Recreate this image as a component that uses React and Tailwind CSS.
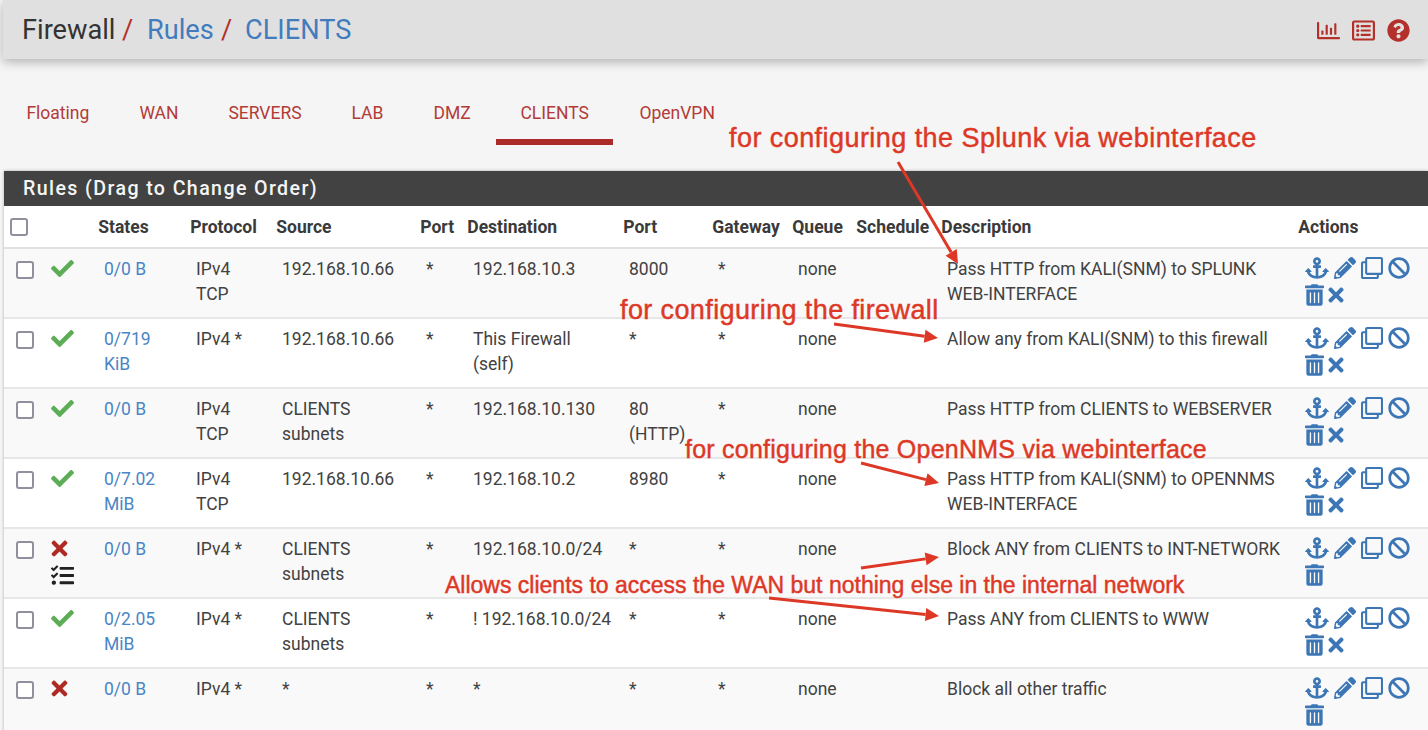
import React from "react";
import {
  FaAnchor, FaPencilAlt, FaRegClone, FaBan, FaTrashAlt, FaTimes, FaCheck,
  FaTasks, FaRegChartBar, FaRegListAlt, FaQuestionCircle,
} from "react-icons/fa";

const COLS = "grid grid-cols-[42px_47px_92px_86px_144px_47px_156px_89px_80px_64px_85px_357px_135px]";

const TABS = [
  ["Floating", "w-[113px]"],
  ["WAN", "w-[89px]"],
  ["SERVERS", "w-[123px]"],
  ["LAB", "w-[82px]"],
  ["DMZ", "w-[87px]"],
  ["CLIENTS", "w-[119px]"],
  ["OpenVPN", "w-[110px]"],
];

const HEADS = ["States", "Protocol", "Source", "Port", "Destination", "Port", "Gateway", "Queue", "Schedule", "Description", "Actions"];

const RULES = [
  { ok: true, cells: ["0/0 B", "IPv4\nTCP", "192.168.10.66", "*", "192.168.10.3", "8000", "*", "none", "", "Pass HTTP from KALI(SNM) to SPLUNK\nWEB-INTERFACE"], clear: true },
  { ok: true, cells: ["0/719\nKiB", "IPv4 *", "192.168.10.66", "*", "This Firewall\n(self)", "*", "*", "none", "", "Allow any from KALI(SNM) to this firewall"], clear: true },
  { ok: true, cells: ["0/0 B", "IPv4\nTCP", "CLIENTS\nsubnets", "*", "192.168.10.130", "80\n(HTTP)", "*", "none", "", "Pass HTTP from CLIENTS to WEBSERVER"], clear: true },
  { ok: true, cells: ["0/7.02\nMiB", "IPv4\nTCP", "192.168.10.66", "*", "192.168.10.2", "8980", "*", "none", "", "Pass HTTP from KALI(SNM) to OPENNMS\nWEB-INTERFACE"], clear: true },
  { ok: false, log: true, cells: ["0/0 B", "IPv4 *", "CLIENTS\nsubnets", "*", "192.168.10.0/24", "*", "*", "none", "", "Block ANY from CLIENTS to INT-NETWORK"] },
  { ok: true, cells: ["0/2.05\nMiB", "IPv4 *", "CLIENTS\nsubnets", "*", "! 192.168.10.0/24", "*", "*", "none", "", "Pass ANY from CLIENTS to WWW"], clear: true },
  { ok: false, cells: ["0/0 B", "IPv4 *", "*", "*", "*", "*", "*", "none", "", "Block all other traffic"] },
];

const Box = () => <span className="block size-[18px] rounded-[3px] border-2 border-[#8f8f9d] bg-white" />;

function Rule({ rule, odd }) {
  return (
    <div className={`${COLS} h-[70px] shrink-0 border-b-2 border-[#e7e7e7] pt-[8px] leading-[25px] ${odd ? "bg-[#f9f9f9]" : "bg-white"}`}>
      <div className="pt-[4px] pl-[12px]"><Box /></div>
      <div className="flex flex-col gap-[4px] pl-[5px]">
        {rule.ok ? <FaCheck size={23} color="#5cad56" /> : <FaTimes size={23} color="#ae2a25" className="-ml-[3px]" />}
        {rule.log && <FaTasks size={23} color="#212121" />}
      </div>
      {rule.cells.map((c, i) => (
        <div key={i} className={`pl-[11px] whitespace-pre ${i === 0 ? "text-[#4a85c5]" : ""}`}>{c}</div>
      ))}
      <div className="flex flex-col gap-[5px] pl-[12px] text-[#3d76b5]">
        <div className="flex gap-[5px]">
          <FaAnchor size={22} className="w-[24px]" />
          <FaPencilAlt size={22} />
          <FaRegClone size={22} />
          <FaBan size={22} />
        </div>
        <div className="flex gap-[4px]">
          <FaTrashAlt size={22} className="w-[19px]" />
          {rule.clear && <FaTimes size={22} className="w-[16px]" />}
        </div>
      </div>
    </div>
  );
}

function Arrow({ x1, y1, x2, y2 }) {
  const a = Math.atan2(y2 - y1, x2 - x1);
  const c = Math.cos(a), s = Math.sin(a);
  const bx = x2 - 13.5 * c, by = y2 - 13.5 * s;
  return (
    <g>
      <line x1={x1} y1={y1} x2={bx} y2={by} strokeWidth="3" />
      <polygon stroke="none" points={`${x2},${y2} ${bx - 6.5 * s},${by + 6.5 * c} ${bx + 6.5 * s},${by - 6.5 * c}`} />
    </g>
  );
}

export default function App() {
  return (
    <div className="relative flex h-[730px] w-[1428px] flex-col overflow-hidden bg-[#f5f5f5] font-[Roboto,sans-serif] text-[17.5px] text-[#424242]">
      <header className="ml-[3px] flex h-[59px] shrink-0 items-center bg-[#e0e0e0] pr-[18px] pl-[19px] shadow-[0_3px_10px_rgba(0,0,0,0.28)]">
        <div className="flex flex-1 text-[27.2px] leading-[58px]">
          <span className="w-[100px] text-[#333]">Firewall</span>
          <span className="w-[25px] text-[#b3302b]">/</span>
          <span className="w-[74px] text-[#427cbd]">Rules</span>
          <span className="w-[24px] text-[#b3302b]">/</span>
          <span className="text-[#427cbd]">CLIENTS</span>
        </div>
        <div className="flex gap-[12px] pt-[2px] text-[#b3302b]">
          <FaRegChartBar size={23} />
          <FaRegListAlt size={23} />
          <FaQuestionCircle size={23} />
        </div>
      </header>

      <nav className="flex h-[112px] shrink-0 pt-[41px] pl-[26.4px] text-[#b23b38]">
        {TABS.map(([t, w]) => (
          <div key={t} className={`${w} leading-[26px]`}>
            {t}
            {t === "CLIENTS" && <div className="mt-[13px] -ml-[24px] h-[6px] w-[117px] bg-[#ab2b28]" />}
          </div>
        ))}
      </nav>

      <main className="ml-[4px] flex flex-1 flex-col shadow-[0_0_3px_rgba(0,0,0,0.3)]">
        <div className="h-[35px] shrink-0 bg-[#424242] pl-[19px] text-[19.6px] leading-[35px] font-medium tracking-[1.4px] text-[#f5f5f5]">
          Rules (Drag to Change Order)
        </div>
        <div className={`${COLS} h-[43px] shrink-0 border-b-2 border-[#e0e0e0] bg-white leading-[43px] font-bold text-[#3a3a3a]`}>
          <div className="pt-[12px] pl-[6px]"><Box /></div>
          <div />
          {HEADS.map((h, i) => <div key={i} className="pl-[5.3px] whitespace-nowrap">{h}</div>)}
        </div>
        {RULES.map((r, i) => <Rule key={i} rule={r} odd={i % 2 === 0} />)}
      </main>

      <div className="absolute inset-0 font-['Liberation_Sans',sans-serif] text-[#dd3826] [-webkit-text-stroke:0.45px_#dd3826]">
        <span className="absolute top-[122px] left-[729px] text-[27px] leading-[32px] tracking-[0.44px] whitespace-nowrap">for configuring the Splunk via webinterface</span>
        <span className="absolute top-[294px] left-[620px] text-[27px] leading-[32px] tracking-[0.39px] whitespace-nowrap">for configuring the firewall</span>
        <span className="absolute top-[433px] left-[685px] text-[25px] leading-[32px] tracking-[0.24px] whitespace-nowrap">for configuring the OpenNMS via webinterface</span>
        <span className="absolute top-[569px] left-[445px] text-[23px] leading-[32px] whitespace-nowrap">Allows clients to access the WAN but nothing else in the internal network</span>
        <svg className="absolute inset-0" width="1428" height="730" fill="#dd3826" stroke="#dd3826">
          <Arrow x1={898} y1={162} x2={958} y2={264} />
          <Arrow x1={834} y1={324} x2={938} y2={338} />
          <Arrow x1={861} y1={463} x2={939} y2={483} />
          <Arrow x1={861} y1={568} x2={939} y2={557} />
          <Arrow x1={769} y1={598} x2={939} y2={616} />
        </svg>
      </div>
    </div>
  );
}
